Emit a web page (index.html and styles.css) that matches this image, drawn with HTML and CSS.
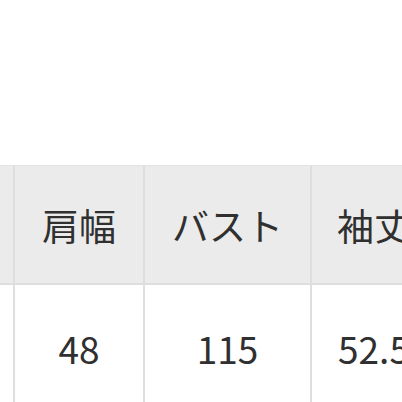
FILE: index.html
```html
<!DOCTYPE html>
<html lang="ja">
<head>
<meta charset="utf-8">
<link rel="stylesheet" href="styles.css">
</head>
<body>
<div class="sheet">
  <div class="grid">
    <div class="cell head"></div>
    <div class="cell head">肩幅</div>
    <div class="cell head">バスト</div>
    <div class="cell head">袖丈</div>
    <div class="cell"></div>
    <div class="cell">48</div>
    <div class="cell">115</div>
    <div class="cell">52.5</div>
  </div>
</div>
</body>
</html>
```
FILE: styles.css
```css
html, body {
  margin: 0;
  padding: 0;
  background: #ffffff;
  overflow: hidden;
}
.sheet {
  width: 402px;
  height: 402px;
  overflow: hidden;
  padding-top: 165px;
  box-sizing: border-box;
}
.grid {
  display: grid;
  grid-template-columns: 13px 128px 165px 124px;
  grid-template-rows: 117px 125px;
  column-gap: 2px;
  row-gap: 2px;
  background: #dedede;
  border-top: 1px solid #e2e2e2;
  width: max-content;
}
.cell {
  background: #ffffff;
  display: flex;
  align-items: center;
  justify-content: center;
  font-family: "Noto Sans CJK JP", "Noto Sans", sans-serif;
  font-size: 37px;
  font-weight: 400;
  color: #303030;
  white-space: nowrap;
}
.head {
  background: #ebebeb;
}
```
